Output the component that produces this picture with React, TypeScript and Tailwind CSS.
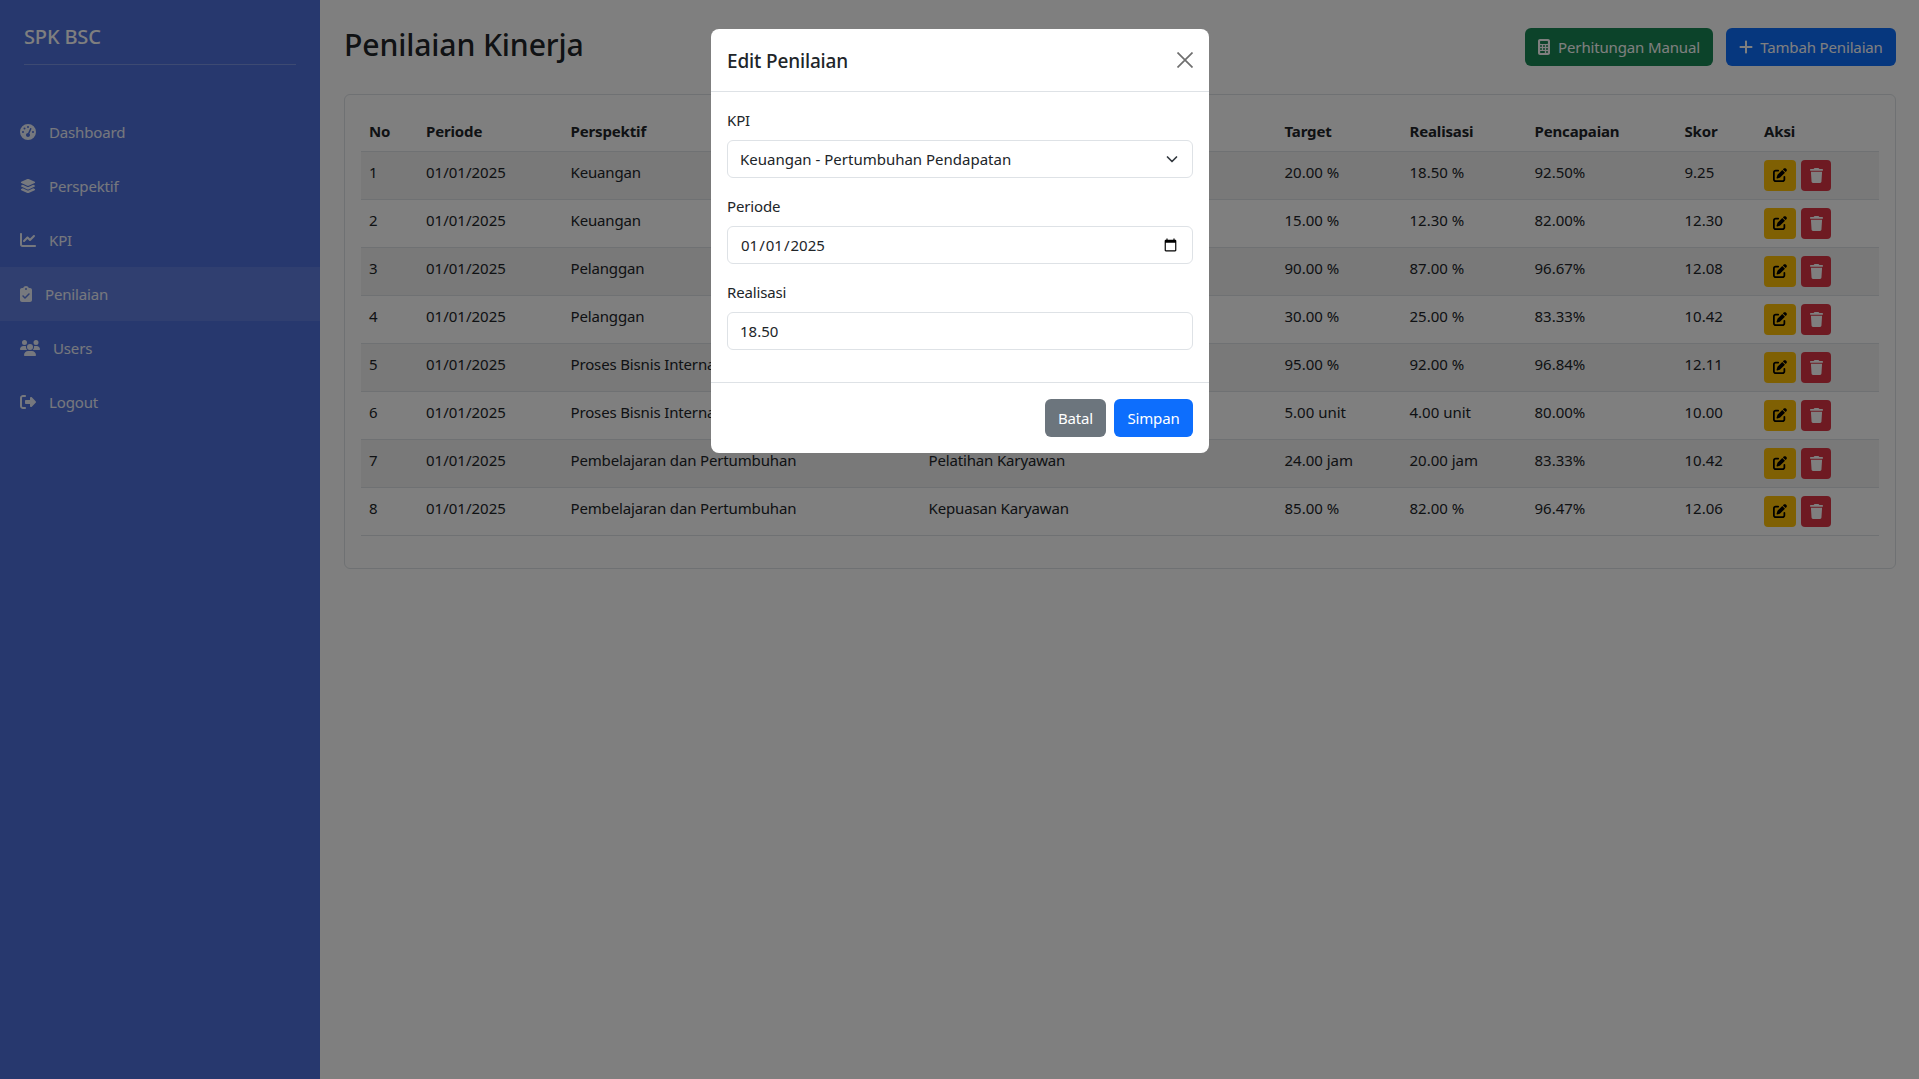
import {
  FaCalculator,
  FaChartLine,
  FaClipboardCheck,
  FaGaugeHigh,
  FaLayerGroup,
  FaPenToSquare,
  FaPlus,
  FaRightFromBracket,
  FaTrash,
  FaUsers,
} from "react-icons/fa6";

const menu = [
  { label: "Dashboard", icon: FaGaugeHigh, size: "h-4 w-4" },
  { label: "Perspektif", icon: FaLayerGroup, size: "h-4 w-4" },
  { label: "KPI", icon: FaChartLine, size: "h-4 w-4" },
  { label: "Penilaian", icon: FaClipboardCheck, size: "h-4 w-3", active: true },
  { label: "Users", icon: FaUsers, size: "h-4 w-5" },
  { label: "Logout", icon: FaRightFromBracket, size: "h-4 w-4" },
];

const rows = [
  ["1", "Keuangan", "Pertumbuhan Pendapatan", "20.00 %", "18.50 %", "92.50%", "9.25"],
  ["2", "Keuangan", "Efisiensi Biaya", "15.00 %", "12.30 %", "82.00%", "12.30"],
  ["3", "Pelanggan", "Kepuasan Pelanggan", "90.00 %", "87.00 %", "96.67%", "12.08"],
  ["4", "Pelanggan", "Pelanggan Baru", "30.00 %", "25.00 %", "83.33%", "10.42"],
  ["5", "Proses Bisnis Internal", "Ketepatan Waktu", "95.00 %", "92.00 %", "96.84%", "12.11"],
  ["6", "Proses Bisnis Internal", "Inovasi Produk", "5.00 unit", "4.00 unit", "80.00%", "10.00"],
  ["7", "Pembelajaran dan Pertumbuhan", "Pelatihan Karyawan", "24.00 jam", "20.00 jam", "83.33%", "10.42"],
  ["8", "Pembelajaran dan Pertumbuhan", "Kepuasan Karyawan", "85.00 %", "82.00 %", "96.47%", "12.06"],
];

const heads = [
  ["No", "w-[57px]"],
  ["Periode", "w-[144.5px]"],
  ["Perspektif", "w-[358px]"],
  ["KPI", "w-[356px]"],
  ["Target", "w-[125px]"],
  ["Realisasi", "w-[125px]"],
  ["Pencapaian", "w-[150px]"],
  ["Skor", "w-[79.5px]"],
  ["Aksi", "w-[123px]"],
];

const fieldClass =
  "h-[38px] w-full rounded-md border border-[#dee2e6] bg-white px-3 tracking-normal text-[#212529] outline-none";
const textCell = "px-2 pt-[9px] align-top";
const numCell = "px-2 pt-[9px] align-top tracking-normal";

function Sidebar() {
  return (
    <aside className="w-[320px] shrink-0 bg-[#4e70dc]">
      <div className="px-6 pt-[22px]">
        <div className="border-b border-white/25 pb-3 text-[20px] font-medium leading-[30px] text-white">
          SPK BSC
        </div>
      </div>
      <nav className="mt-10 flex flex-col">
        {menu.map((m) => (
          <a
            key={m.label}
            className={
              m.active
                ? "flex h-[54px] items-center gap-[13px] bg-white/10 pl-5 text-white/90"
                : "flex h-[54px] items-center gap-[13px] pl-5 text-white/90"
            }
          >
            <m.icon className={`${m.size} shrink-0`} />
            <span>{m.label}</span>
          </a>
        ))}
      </nav>
    </aside>
  );
}

function PenilaianTable() {
  return (
    <table className="w-[1518px] table-fixed border-collapse text-[#212529]">
      <thead>
        <tr className="h-10 border-b border-[#dee2e6]">
          {heads.map(([h, w]) => (
            <th key={h} className={`${w} px-2 text-left font-bold`}>
              {h}
            </th>
          ))}
        </tr>
      </thead>
      <tbody>
        {rows.map((r, i) => (
          <tr
            key={r[0]}
            className={
              i % 2 === 0
                ? "h-12 border-b border-[#dee2e6] bg-black/5"
                : "h-12 border-b border-[#dee2e6]"
            }
          >
            <td className={numCell}>{r[0]}</td>
            <td className={numCell}>01/01/2025</td>
            <td className={textCell}>{r[1]}</td>
            <td className={textCell}>{r[2]}</td>
            <td className={numCell}>{r[3]}</td>
            <td className={numCell}>{r[4]}</td>
            <td className={numCell}>{r[5]}</td>
            <td className={numCell}>{r[6]}</td>
            <td className="px-2 pt-2 align-top">
              <div className="flex gap-[5px]">
                <button className="flex h-[31px] w-8 items-center justify-center rounded bg-[#ffc107] text-black">
                  <FaPenToSquare className="h-[14px] w-[14px]" />
                </button>
                <button className="flex h-[31px] w-[30px] items-center justify-center rounded bg-[#dc3545] text-white">
                  <FaTrash className="h-[15px] w-[13px]" />
                </button>
              </div>
            </td>
          </tr>
        ))}
      </tbody>
    </table>
  );
}

function EditModal() {
  return (
    <div className="fixed inset-0 flex justify-center bg-black/50 pl-px pt-[29px]">
      <div className="h-[424px] w-[498px] rounded-lg bg-white text-[#212529]">
        <div className="flex h-[63px] items-center justify-between border-b border-[#dee2e6] px-4">
          <h5 className="pt-[2px] text-[19px] font-medium">Edit Penilaian</h5>
          <svg viewBox="0 0 16 16" className="h-4 w-4 text-[#6f6f6f]" fill="none" stroke="currentColor" strokeWidth="1.7">
            <path d="M.5.5l15 15M15.5.5l-15 15" />
          </svg>
        </div>
        <div className="flex flex-col p-4">
          <label className="mb-2 h-6 pt-px">KPI</label>
          <div className="relative mb-4">
            <select className={`${fieldClass} appearance-none`} defaultValue="1">
              <option value="1">Keuangan - Pertumbuhan Pendapatan</option>
            </select>
            <svg
              viewBox="0 0 16 16"
              className="absolute right-[13px] top-[11px] h-4 w-4 text-[#343a40]"
              fill="none"
              stroke="currentColor"
              strokeWidth="1.7"
              strokeLinecap="round"
              strokeLinejoin="round"
            >
              <path d="m3.5 6 4.5 4.5 4.5-4.5" />
            </svg>
          </div>
          <label className="mb-2 h-6 pt-px">Periode</label>
          <input type="date" defaultValue="2025-01-01" className={`${fieldClass} mb-4`} />
          <label className="mb-2 h-6 pt-px">Realisasi</label>
          <input type="text" defaultValue="18.50" className={`${fieldClass} mb-4`} />
        </div>
        <div className="flex justify-end gap-2 border-t border-[#dee2e6] p-4">
          <button className="h-[38px] w-[61px] rounded-md bg-[#6c757d] text-white">Batal</button>
          <button className="h-[38px] w-[79px] rounded-md bg-[#0d6efd] text-white">Simpan</button>
        </div>
      </div>
    </div>
  );
}

export default function App() {
  return (
    <div className="flex min-h-screen bg-white font-['Noto_Sans',sans-serif] text-[15px] tracking-[-0.01em]">
      <Sidebar />
      <main className="flex-1 pl-6 pr-[23px] pt-[28px]">
        <div className="mb-[28px] flex h-[38px] items-center justify-between">
          <h2 className="pb-[5px] text-[30.2px] font-medium text-[#212529]">Penilaian Kinerja</h2>
          <div className="flex gap-[13px]">
            <button className="flex h-[38px] w-[188px] items-center justify-center gap-2 rounded-md bg-[#198754] text-white">
              <FaCalculator className="h-4 w-3" />
              Perhitungan Manual
            </button>
            <button className="flex h-[38px] w-[170px] items-center justify-center gap-[7px] rounded-md bg-[#0d6efd] text-white">
              <FaPlus className="h-4 w-[14px]" />
              Tambah Penilaian
            </button>
          </div>
        </div>
        <div className="rounded-md border border-[#dee2e6] p-4 pb-8">
          <PenilaianTable />
        </div>
      </main>
      <EditModal />
    </div>
  );
}
